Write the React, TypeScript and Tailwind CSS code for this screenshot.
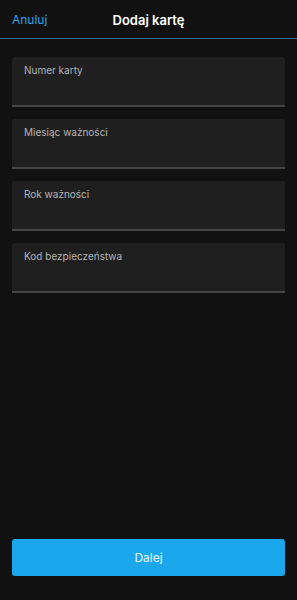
import React from "react";

const fields = ["Numer karty", "Miesiąc ważności", "Rok ważności", "Kod bezpieczeństwa"];

export default function App() {
  return (
    <div
      className="flex h-[600px] w-full flex-col bg-[#111111] text-white"
      style={{ fontFamily: "Inter, 'Liberation Sans', sans-serif" }}
    >
      {/* Header */}
      <div className="relative flex h-[39px] shrink-0 items-center border-b border-[#3d6e91] px-3 pt-[2px]">
        <button className="text-[12px] text-[#2ea3e3]">Anuluj</button>
        <div className="absolute left-1/2 top-1/2 -translate-x-1/2 -translate-y-[40%] text-[13px] font-semibold">
          Dodaj kartę
        </div>
      </div>

      {/* Form fields */}
      <div className="flex flex-col gap-3 px-3 pt-[18px]">
        {fields.map((label) => (
          <div
            key={label}
            className="h-[50px] rounded-t-[3px] border-b-2 border-[#454545] bg-[#1f1f1f] px-3 pt-[4px] leading-[14px]"
          >
            <span className="text-[10px] text-[#b5b5b5]">{label}</span>
          </div>
        ))}
      </div>

      <div className="flex-1" />

      {/* Submit */}
      <div className="px-3 pb-6">
        <button className="h-[37px] w-full rounded-[3px] bg-[#1aa7ec] text-[12px] text-[#eaf6ff]">
          Dalej
        </button>
      </div>
    </div>
  );
}
